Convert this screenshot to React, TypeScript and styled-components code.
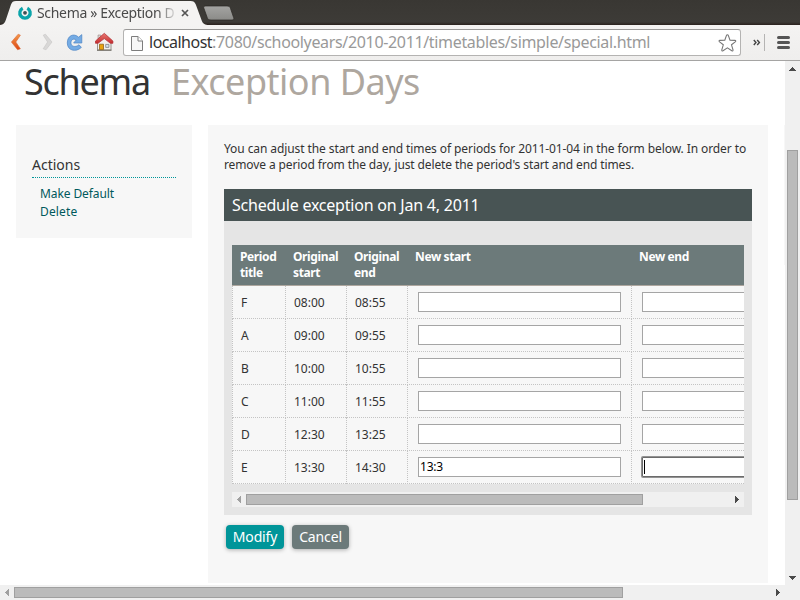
import React from 'react';
import styled, { createGlobalStyle } from 'styled-components';

const GlobalStyle = createGlobalStyle`
  *, *::before, *::after { box-sizing: border-box; }
  body {
    margin: 0;
    overflow: hidden;
    background: #fff;
    color: #333;
    font-family: 'Noto Sans', 'Open Sans', sans-serif;
    font-size: 12px;
  }
  h1, h2, h3, p, ul { margin: 0; padding: 0; font-weight: 400; }
`;

const Browser = styled.div`
  width: 800px;
  height: 600px;
  display: flex;
  flex-direction: column;
  overflow: hidden;
`;

/* Browser chrome */
const TabStrip = styled.div`
  height: 25px;
  flex: none;
  background: linear-gradient(#393733, #3d3b37 22px, #2a211d 25px);
`;
const TabShapes = styled.svg`
  display: block;
`;
const TabBar = styled.div`
  display: grid;
  height: 25px;
  & > * { grid-area: 1 / 1; }
`;
const TabContent = styled.div`
  display: flex;
  align-items: center;
  height: 25px;
  padding-left: 17px;
`;
const TabTitle = styled.span`
  width: 138px;
  margin: 0 0 0 4px;
  overflow: hidden;
  white-space: nowrap;
  font-size: 14px;
  line-height: 24px;
  letter-spacing: -0.33px;
  color: #4a4a4a;
  mask-image: linear-gradient(to right, #000 120px, transparent 141px);
`;
const CloseIcon = styled.svg`
  margin-left: 6px;
`;

const Toolbar = styled.div`
  height: 36px;
  flex: none;
  display: flex;
  align-items: center;
  padding: 0 8px 0 9px;
  background: linear-gradient(#f4f3f2, #efeeed);
  border-bottom: 1px solid #a5a4a3;
`;
const NavIcons = styled.div`
  display: flex;
  width: 114px;
  height: 36px;
  flex: none;
`;
const AddressBar = styled.div`
  width: 618px;
  height: 27px;
  flex: none;
  display: flex;
  align-items: center;
  padding: 0 2px 0 7px;
  background: #fff;
  border: 1px solid #b4b3b2;
  border-top-color: #9a9998;
  border-radius: 3px;
`;
const Url = styled.span`
  flex: 1;
  margin: -1px 0 0 6px;
  white-space: nowrap;
  font-size: 16px;
  line-height: 24px;
  letter-spacing: -0.34px;
  color: #999;
`;
const UrlHost = styled.span`
  color: #333;
  letter-spacing: -0.5px;
`;
const ToolbarEnd = styled.svg`
  margin-left: 8px;
  flex: none;
`;

/* Page viewport and scrollbars */
const Viewport = styled.div`
  height: 539px;
  display: grid;
  grid-template: 524px 15px / 785px 15px;
`;
const ScrollTrack = styled.div<{ $vertical?: boolean }>`
  display: flex;
  flex-direction: ${p => (p.$vertical ? 'column' : 'row')};
  align-items: center;
  background: #f0f0f0;
`;
const ScrollThumb = styled.div<{ $vertical?: boolean; $size: number }>`
  width: ${p => (p.$vertical ? '11px' : `${p.$size}px`)};
  height: ${p => (p.$vertical ? `${p.$size}px` : '11px')};
  background: #bbb;
  border: 1px solid #a0a0a0;
`;
const ScrollGap = styled.div<{ $size?: number }>`
  flex: ${p => (p.$size ? `0 0 ${p.$size}px` : '1')};
`;
const ScrollCorner = styled.div`
  background: #f0f0f0;
`;
const ArrowSvg = styled.svg`
  display: block;
  flex: none;
`;

const Page = styled.div`
  display: flex;
  flex-direction: column;
`;
const Heading = styled.h1`
  height: 64px;
  flex: none;
  display: flex;
  gap: 21px;
  padding-left: 24px;
  font-size: 36px;
  line-height: 41px;
  white-space: nowrap;
`;
const AppName = styled.span`
  width: 126px;
  color: #333;
  letter-spacing: -1.25px;
`;
const PageName = styled.span`
  color: #aea79f;
  letter-spacing: -0.5px;
`;
const Columns = styled.div`
  display: grid;
  grid-template-columns: 176px 560px 1px;
  gap: 16px;
  align-items: start;
  padding-left: 16px;
`;
const Sidebar = styled.aside`
  height: 113px;
  padding: 29px 16px 0;
  background: #f7f7f7;
`;
const SidebarTitle = styled.h3`
  height: 24px;
  border-bottom: 1px dotted #009599;
  font-size: 14px;
  line-height: 22px;
`;
const ActionList = styled.ul`
  list-style: none;
  padding: 7px 0 0 8px;
`;
const ActionItem = styled.li<{ $spacing?: number }>`
  height: 18px;
  line-height: 18px;
  color: #00595c;
  letter-spacing: ${p => p.$spacing ?? 0}px;
`;
const RightEdge = styled.div`
  height: 140px;
  background: #f7f7f7;
`;
const Main = styled.main`
  height: 458px;
  padding: 16px 16px 0;
  background: #f7f7f7;
`;
const Intro = styled.p`
  height: 48px;
  line-height: 16px;
  white-space: nowrap;
`;
const IntroLine = styled.span<{ $spacing: number }>`
  display: block;
  letter-spacing: ${p => p.$spacing}px;
`;

/* Schedule card */
const Card = styled.section`
  height: 326px;
  background: #e5e5e5;
`;
const CardTitle = styled.h2`
  height: 32px;
  padding-left: 8px;
  background: #485454;
  color: #fff;
  font-size: 16px;
  line-height: 32px;
  letter-spacing: -0.22px;
`;
const CardBody = styled.div`
  padding: 24px 8px 0;
`;
const TableClip = styled.div`
  height: 247px;
  overflow: hidden;
`;
const Table = styled.div`
  width: 736px;
`;
const columns = 'grid-template-columns: 54px 61px 61px 224px 224px;';
const HeadRow = styled.div`
  display: grid;
  ${columns}
  height: 41px;
  background: #6c7a7a;
  border-bottom: 1px solid #aea79f;
  color: #fff;
`;
const HeadCell = styled.div<{ $first?: boolean }>`
  padding: 4px 0 0 ${p => (p.$first ? 8 : 7)}px;
  font-weight: 700;
  line-height: 16px;
  letter-spacing: -0.38px;
`;
const BodyRow = styled.div`
  display: grid;
  ${columns}
  height: 33px;
  background: #f7f7f7;
  border-bottom: 1px dotted #c4c4c4;
`;
const Cell = styled.div<{ $first?: boolean }>`
  padding-left: 8px;
  border-right: 1px dotted #c4c4c4;
  border-left: ${p => (p.$first ? '1px dotted #c4c4c4' : 'none')};
  line-height: 33px;
`;
const InputCell = styled(Cell)`
  padding: 6px 0 0 10px;
`;
const TimeInput = styled.div<{ $focused?: boolean }>`
  width: 203px;
  height: 20px;
  display: flex;
  align-items: center;
  padding-left: 1px;
  background: #fff;
  border: 1px solid ${p => (p.$focused ? '#6b6b6b' : '#a5a5a5')};
  border-radius: ${p => (p.$focused ? '1px' : '0')};
  box-shadow: ${p => (p.$focused ? '0 0 0 1px #929292' : 'none')};
  color: #000;
  line-height: 18px;
  letter-spacing: -0.2px;
`;
const Caret = styled.span`
  width: 1px;
  height: 14px;
  background: #000;
`;
const Buttons = styled.div`
  display: flex;
  gap: 8px;
  padding: 10px 0 0 2px;
`;
const Button = styled.button<{ $primary?: boolean }>`
  width: ${p => (p.$primary ? 58 : 57)}px;
  height: 24px;
  padding: 0;
  border: 0;
  border-radius: 4px;
  background: ${p => (p.$primary ? '#009599' : '#6c7a7a')};
  box-shadow: 0 1px 4px rgba(0, 0, 0, 0.3);
  color: #fff;
  font: 14px/24px 'Noto Sans', 'Open Sans', sans-serif;
  letter-spacing: -0.15px;
`;

type Direction = 'up' | 'down' | 'left' | 'right';
const arrowPaths: Record<Direction, string> = {
  up: 'M4 10h7v-1h-1v-1h-1v-1h-1v-1h-1v1h-1v1h-1v1h-1z',
  down: 'M4 6h7v1h-1v1h-1v1h-1v1h-1v-1h-1v-1h-1v-1h-1z',
  left: 'M9 4v7h-1v-1h-1v-1h-1v-1h-1v-1h1v-1h1v-1h1v-1z',
  right: 'M5 4v7h1v-1h1v-1h1v-1h1v-1h-1v-1h-1v-1h-1v-1z',
};
const Arrow = ({ dir, dim }: { dir: Direction; dim?: boolean }) => {
  const vertical = dir === 'up' || dir === 'down';
  const width = vertical ? 15 : 14;
  const height = vertical ? 15 : 15;
  return (
    <ArrowSvg width={width} height={height} viewBox={`0 0 ${width} ${height}`} shapeRendering="crispEdges">
      <path d={arrowPaths[dir]} fill={dim ? '#a0a0a0' : '#4a4a4a'} />
    </ArrowSvg>
  );
};

const rows = [
  ['F', '08:00', '08:55', ''],
  ['A', '09:00', '09:55', ''],
  ['B', '10:00', '10:55', ''],
  ['C', '11:00', '11:55', ''],
  ['D', '12:30', '13:25', ''],
  ['E', '13:30', '14:30', '13:3'],
];

const ToolbarIcons = () => (
  <NavIcons>
    <svg width="114" height="36" viewBox="9 25 114 36">
      <defs>
        <linearGradient id="back" x1="0" y1="0" x2="0" y2="1">
          <stop offset="0" stopColor="#f49a4b" />
          <stop offset="1" stopColor="#dc4512" />
        </linearGradient>
        <linearGradient id="roof" x1="0" y1="0" x2="0" y2="1">
          <stop offset="0" stopColor="#e77872" />
          <stop offset="1" stopColor="#c62d2e" />
        </linearGradient>
      </defs>
      <path d="M18.2 34.2 11.4 42 17.6 49.8 20.4 48.8 15.8 42 20.4 35.2z" fill="url(#back)" stroke="#dc6a36" strokeWidth=".6" strokeLinejoin="round" />
      <path d="M45.4 34.2 52 42 46 49.8 43.2 48.8 47.6 42 43.2 35.2z" fill="#d9d8d7" stroke="#c6c5c4" strokeWidth=".6" strokeLinejoin="round" />
      <path d="M78.6 37.2 81.8 34.6V43H73.6L76.2 40C73.5 38 70.9 39.7 70.9 43C70.9 46.4 75.4 47.8 79 44.8L81.4 47.4C75.8 52.7 67.3 50.6 67.3 43C67.3 35.4 73.9 32.8 78.6 37.2z" fill="#74abe4" stroke="#4d84c3" strokeWidth=".7" strokeLinejoin="round" />
      <path d="M97.5 41 104.3 36 111 41V50H97.5z" fill="#f2f0ed" stroke="#8b8782" strokeWidth=".9" />
      <path d="M97 49.6h14.5v1.4h-14.5z" fill="#85827c" />
      <path d="M99.5 44.2h4v5.4h-4z" fill="#e8a30d" stroke="#93641b" strokeWidth=".8" />
      <path d="M105.7 44.4h3.2v3h-3.2z" fill="#d7e1ea" stroke="#7f8488" strokeWidth=".8" />
      <path d="M98 35h2.8v4h-2.8z" fill="#d7d3cf" stroke="#8e7774" strokeWidth=".5" />
      <path d="M104.3 33.3 112.9 41V43.3H110.4L104.3 38.6 98 43.3H95.5V41z" fill="url(#roof)" stroke="#b02a30" strokeWidth=".7" strokeLinejoin="round" />
    </svg>
  </NavIcons>
);

export default function App() {
  return (
    <>
      <GlobalStyle />
      <Browser>
        <TabStrip>
          <TabBar>
            <TabShapes width="800" height="25" viewBox="0 0 800 25">
              <defs>
                <linearGradient id="newTab" x1="0" y1="0" x2="0" y2="1">
                  <stop offset="0" stopColor="#a4a4a2" />
                  <stop offset="1" stopColor="#8b8b88" />
                </linearGradient>
              </defs>
              <path d="M0 25C3.5 24.7 4.8 23 5.8 20L11 4.5C12 2 13 1 16 1H190.5C193.5 1 194.8 2 195.8 4.5L201.5 20C202.8 23.4 204 24.5 207.5 25z" fill="#f4f3f2" />
              <path d="M205.7 6H227C229 6 229.9 6.7 230.5 8.5L233.6 17.5C234.2 19.3 233.7 20 232 20H211C208.7 20 207.8 19.3 207.2 17.5L203.8 8C203.4 6.7 204 6 205.7 6z" fill="url(#newTab)" stroke="#292623" strokeWidth=".7" />
            </TabShapes>
            <TabContent>
              <svg width="16" height="25" viewBox="17 0 16 25">
                <path d="M22.7 8.2A5.2 5.2 0 1 0 27.3 8.2" fill="none" stroke="#0aa4aa" strokeWidth="3.3" />
                <circle cx="25" cy="12.8" r="1.9" fill="#3e4f52" />
              </svg>
              <TabTitle>Schema » Exception D</TabTitle>
              <CloseIcon width="8" height="8" viewBox="0 0 8 8">
                <path d="M1 1 7 7M7 1 1 7" stroke="#555" strokeWidth="1.7" />
              </CloseIcon>
            </TabContent>
          </TabBar>
        </TabStrip>

        <Toolbar>
          <ToolbarIcons />
          <AddressBar>
            <svg width="12" height="16" viewBox="0 0 12 16">
              <path d="M.5 1.5H7L11.5 6V15.5H.5z" fill="#f7f7f7" stroke="#7d7d7d" />
              <path d="M7 1.5V6H11.5" fill="#fff" stroke="#7d7d7d" />
            </svg>
            <Url><UrlHost>localhost</UrlHost>:7080/schoolyears/2010-2011/timetables/simple/special.html</Url>
            <svg width="20" height="20" viewBox="0 0 20 20">
              <path d="M9.4 1.8Q10.1 1.8 10.4 2.6L12 7.1 16.8 7.4Q18.5 7.7 17.2 8.9L13.5 11.8 15 16.8Q15.2 18.4 13.8 17.7L9.4 14.9 5 17.7Q3.6 18.4 3.8 16.8L5.3 11.8 1.6 8.9Q.3 7.7 2 7.4L6.8 7.1 8.4 2.6Q8.7 1.8 9.4 1.8z" fill="#fff" stroke="#777" strokeWidth="1.1" />
            </svg>
          </AddressBar>
          <ToolbarEnd width="43" height="36" viewBox="749 25 43 36">
            <path d="M753.8 40 756 42.5 753.8 45M757.2 40 759.4 42.5 757.2 45" fill="none" stroke="#444" strokeWidth="1.4" />
            <path d="M764.5 34V51" stroke="#b5b4b3" />
            <path d="M778.5 37.5H788.5M778.5 42.5H788.5M778.5 47.5H788.5" stroke="#555" strokeWidth="3" strokeLinecap="round" />
          </ToolbarEnd>
        </Toolbar>

        <Viewport>
          <Page>
            <Heading><AppName>Schema</AppName><PageName>Exception Days</PageName></Heading>
            <Columns>
              <Sidebar>
                <SidebarTitle>Actions</SidebarTitle>
                <ActionList>
                  <ActionItem $spacing={-0.1}>Make Default</ActionItem>
                  <ActionItem $spacing={0.15}>Delete</ActionItem>
                </ActionList>
              </Sidebar>
              <Main>
                <Intro>
                  <IntroLine $spacing={-0.09}>You can adjust the start and end times of periods for 2011-01-04 in the form below. In order to</IntroLine>
                  <IntroLine $spacing={-0.11}>remove a period from the day, just delete the period's start and end times.</IntroLine>
                </Intro>
                <Card>
                  <CardTitle>Schedule exception on Jan 4, 2011</CardTitle>
                  <CardBody>
                    <TableClip>
                      <Table>
                        <HeadRow>
                          <HeadCell $first>Period<br />title</HeadCell>
                          <HeadCell>Original<br />start</HeadCell>
                          <HeadCell>Original<br />end</HeadCell>
                          <HeadCell>New start</HeadCell>
                          <HeadCell>New end</HeadCell>
                        </HeadRow>
                        {rows.map(([title, start, end, value]) => (
                          <BodyRow key={title}>
                            <Cell $first>{title}</Cell>
                            <Cell>{start}</Cell>
                            <Cell>{end}</Cell>
                            <InputCell><TimeInput>{value}</TimeInput></InputCell>
                            <InputCell>
                              <TimeInput $focused={title === 'E'}>{title === 'E' && <Caret />}</TimeInput>
                            </InputCell>
                          </BodyRow>
                        ))}
                      </Table>
                    </TableClip>
                    <ScrollTrack>
                      <Arrow dir="left" dim />
                      <ScrollThumb $size={397} />
                      <ScrollGap />
                      <Arrow dir="right" />
                    </ScrollTrack>
                  </CardBody>
                </Card>
                <Buttons>
                  <Button $primary>Modify</Button>
                  <Button>Cancel</Button>
                </Buttons>
              </Main>
              <RightEdge />
            </Columns>
          </Page>
          <ScrollTrack $vertical>
            <Arrow dir="up" />
            <ScrollGap $size={74} />
            <ScrollThumb $vertical $size={350} />
            <ScrollGap />
            <Arrow dir="down" />
          </ScrollTrack>
          <ScrollTrack>
            <Arrow dir="left" dim />
            <ScrollThumb $size={609} />
            <ScrollGap />
            <Arrow dir="right" />
          </ScrollTrack>
          <ScrollCorner />
        </Viewport>
      </Browser>
    </>
  );
}
